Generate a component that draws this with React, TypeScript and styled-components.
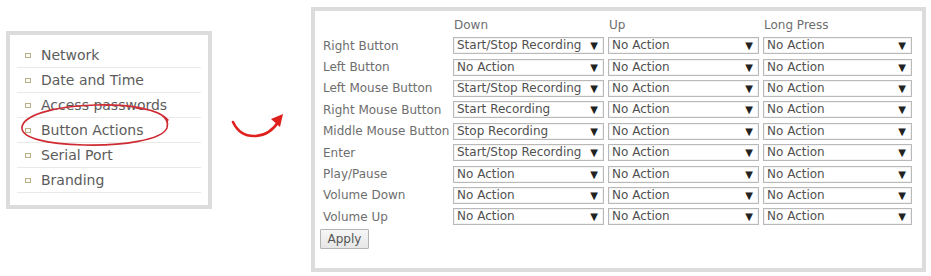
import React from "react";
import styled, { createGlobalStyle } from "styled-components";

const GlobalStyle = createGlobalStyle`
  html, body { margin: 0; padding: 0; background: #ffffff; }
  body { font-family: "DejaVu Sans", Verdana, sans-serif; }
`;

const Page = styled.div`
  display: flex;
  flex-direction: row;
  align-items: flex-start;
  width: 931px;
  height: 276px;
  overflow: hidden;
`;

const NavPanel = styled.div`
  position: relative;
  box-sizing: border-box;
  margin: 31px 0 0 6px;
  width: 206px;
  height: 178px;
  border: 4px solid #dcdcdc;
  padding: 8px 7px 0;
`;

const NavList = styled.ul`
  list-style: none;
  margin: 0;
  padding: 0;
`;

const NavItem = styled.li`
  box-sizing: border-box;
  height: 25px;
  display: flex;
  align-items: center;
  gap: 10px;
  padding-left: 8px;
  border-bottom: 1px solid #e9e9e9;
  font-size: 14px;
  color: #5c5c5c;
  white-space: nowrap;
`;

const Bullet = styled.span`
  box-sizing: border-box;
  width: 6px;
  height: 5px;
  border: 1px solid #b7b08a;
  background: #fbfbf4;
  flex: none;
`;

const Circle = styled.svg`
  position: absolute;
  left: 8px;
  top: 65px;
  pointer-events: none;
`;

const ArrowArea = styled.svg`
  flex: none;
  width: 99px;
  height: 160px;
`;

const Panel = styled.div`
  box-sizing: border-box;
  margin-top: 7px;
  width: 615px;
  height: 265px;
  border: 4px solid #dcdcdc;
  padding: 4px 0 0 5px;
`;

const Row = styled.div<{ $header?: boolean }>`
  display: grid;
  grid-template-columns: 129px 151px 151px 149px;
  column-gap: 4px;
  align-items: center;
  height: ${(p) => (p.$header ? "20px" : "21.4px")};
  font-size: 12px;
  color: #6e6e6e;
  white-space: nowrap;
`;

const Label = styled.div`
  padding-left: 3px;
`;

const Head = styled.div`
  padding-left: 1px;
`;

const SelectWrap = styled.div`
  position: relative;
  height: 17px;
`;

const Select = styled.select`
  appearance: none;
  -webkit-appearance: none;
  box-sizing: border-box;
  width: 100%;
  height: 17px;
  margin: 0;
  padding: 0 14px 0 3px;
  border: 1px solid #b9b9b9;
  border-radius: 0;
  background: #ffffff;
  font-family: "DejaVu Sans", Verdana, sans-serif;
  font-size: 12px;
  line-height: 15px;
  color: #505050;
  box-shadow: inset 0 0 0 1px #f3f3f3;
`;

const Caret = styled.span`
  position: absolute;
  right: 6px;
  top: 3px;
  font-size: 10px;
  line-height: 11px;
  color: #222222;
  pointer-events: none;
`;

const ApplyButton = styled.button`
  box-sizing: border-box;
  margin-top: 0;
  width: 49px;
  height: 20px;
  padding: 0;
  border: 1px solid #b4b4b4;
  border-radius: 1px;
  background: linear-gradient(#f6f6f6, #e6e6e6);
  font-family: "DejaVu Sans", Verdana, sans-serif;
  font-size: 12px;
  color: #555555;
`;

const OPTIONS = [
  "No Action",
  "Start Recording",
  "Stop Recording",
  "Start/Stop Recording",
];

const rows: [string, string][] = [
  ["Right Button", "Start/Stop Recording"],
  ["Left Button", "No Action"],
  ["Left Mouse Button", "Start/Stop Recording"],
  ["Right Mouse Button", "Start Recording"],
  ["Middle Mouse Button", "Stop Recording"],
  ["Enter", "Start/Stop Recording"],
  ["Play/Pause", "No Action"],
  ["Volume Down", "No Action"],
  ["Volume Up", "No Action"],
];

const ActionSelect: React.FC<{ value: string }> = ({ value }) => (
  <SelectWrap>
    <Select defaultValue={value}>
      {OPTIONS.map((o) => (
        <option key={o} value={o}>
          {o}
        </option>
      ))}
    </Select>
    <Caret>▼</Caret>
  </SelectWrap>
);

const navItems = [
  "Network",
  "Date and Time",
  "Access passwords",
  "Button Actions",
  "Serial Port",
  "Branding",
];

export default function App() {
  return (
    <>
      <GlobalStyle />
      <Page>
        <NavPanel>
          <NavList>
            {navItems.map((n) => (
              <NavItem key={n}>
                <Bullet />
                {n}
              </NavItem>
            ))}
          </NavList>
          <Circle width="160" height="52" viewBox="0 0 160 52">
            <path
              d="M 118 8 C 142 10 152 18 149 28 C 144 40 104 46 66 45 C 28 44 4 38 4 28 C 4 16 34 6 78 5 C 112 4 140 9 150 20"
              fill="none"
              stroke="#cf2b33"
              strokeWidth="1.6"
              strokeLinecap="round"
            />
          </Circle>
        </NavPanel>
        <ArrowArea viewBox="0 0 99 160">
          <path
            d="M 21 122 Q 28 137 44 136 Q 58 135 67 121"
            fill="none"
            stroke="#e0201c"
            strokeWidth="2.6"
            strokeLinecap="round"
          />
          <polygon points="71,114 59,119 68,127" fill="#e0201c" />
        </ArrowArea>
        <Panel>
          <Row $header>
            <span />
            <Head>Down</Head>
            <Head>Up</Head>
            <Head>Long Press</Head>
          </Row>
          {rows.map(([label, down]) => (
            <Row key={label}>
              <Label>{label}</Label>
              <ActionSelect value={down} />
              <ActionSelect value="No Action" />
              <ActionSelect value="No Action" />
            </Row>
          ))}
          <ApplyButton>Apply</ApplyButton>
        </Panel>
      </Page>
    </>
  );
}
